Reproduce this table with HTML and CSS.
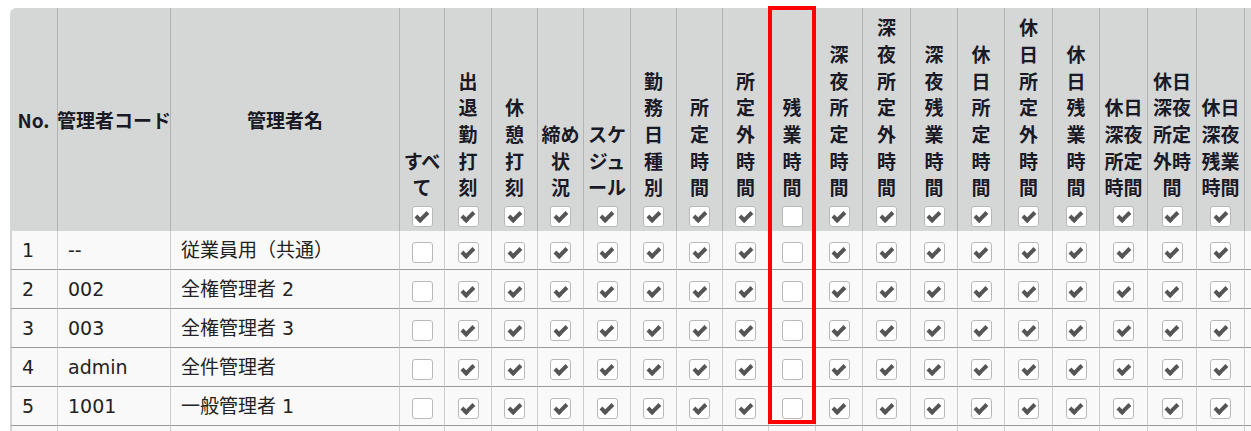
FILE: index.html
```html
<!DOCTYPE html>
<html lang="ja">
<head>
<meta charset="utf-8">
<title>管理者別 表示項目設定</title>
<link rel="stylesheet" href="styles.css">
</head>
<body>
<div class="wrap">
  <div class="grid">
    <div class="h mid first">No.</div>
    <div class="h mid">管理者コード</div>
    <div class="h mid">管理者名</div>
    <div class="h"><div class="lbl">すべ<br>て</div><span class="cb on"></span></div>
    <div class="h"><div class="lbl">出<br>退<br>勤<br>打<br>刻</div><span class="cb on"></span></div>
    <div class="h"><div class="lbl">休<br>憩<br>打<br>刻</div><span class="cb on"></span></div>
    <div class="h"><div class="lbl">締め<br>状<br>況</div><span class="cb on"></span></div>
    <div class="h"><div class="lbl">スケ<br>ジュ<br>ール</div><span class="cb on"></span></div>
    <div class="h"><div class="lbl">勤<br>務<br>日<br>種<br>別</div><span class="cb on"></span></div>
    <div class="h"><div class="lbl">所<br>定<br>時<br>間</div><span class="cb on"></span></div>
    <div class="h"><div class="lbl">所<br>定<br>外<br>時<br>間</div><span class="cb on"></span></div>
    <div class="h"><div class="lbl">残<br>業<br>時<br>間</div><span class="cb"></span></div>
    <div class="h"><div class="lbl">深<br>夜<br>所<br>定<br>時<br>間</div><span class="cb on"></span></div>
    <div class="h"><div class="lbl">深<br>夜<br>所<br>定<br>外<br>時<br>間</div><span class="cb on"></span></div>
    <div class="h"><div class="lbl">深<br>夜<br>残<br>業<br>時<br>間</div><span class="cb on"></span></div>
    <div class="h"><div class="lbl">休<br>日<br>所<br>定<br>時<br>間</div><span class="cb on"></span></div>
    <div class="h"><div class="lbl">休<br>日<br>所<br>定<br>外<br>時<br>間</div><span class="cb on"></span></div>
    <div class="h"><div class="lbl">休<br>日<br>残<br>業<br>時<br>間</div><span class="cb on"></span></div>
    <div class="h"><div class="lbl">休日<br>深夜<br>所定<br>時間</div><span class="cb on"></span></div>
    <div class="h"><div class="lbl">休日<br>深夜<br>所定<br>外時<br>間</div><span class="cb on"></span></div>
    <div class="h"><div class="lbl">休日<br>深夜<br>残業<br>時間</div><span class="cb on"></span></div>
    <div class="h"><span class="cb on"></span></div>

    <div class="c first">1</div><div class="c">--</div><div class="c">従業員用（共通）</div>
    <div class="c k"><span class="cb"></span></div><div class="c k"><span class="cb on"></span></div><div class="c k"><span class="cb on"></span></div><div class="c k"><span class="cb on"></span></div><div class="c k"><span class="cb on"></span></div><div class="c k"><span class="cb on"></span></div><div class="c k"><span class="cb on"></span></div><div class="c k"><span class="cb on"></span></div><div class="c k"><span class="cb"></span></div><div class="c k"><span class="cb on"></span></div><div class="c k"><span class="cb on"></span></div><div class="c k"><span class="cb on"></span></div><div class="c k"><span class="cb on"></span></div><div class="c k"><span class="cb on"></span></div><div class="c k"><span class="cb on"></span></div><div class="c k"><span class="cb on"></span></div><div class="c k"><span class="cb on"></span></div><div class="c k"><span class="cb on"></span></div><div class="c k"><span class="cb on"></span></div>

    <div class="c first">2</div><div class="c">002</div><div class="c">全権管理者 2</div>
    <div class="c k"><span class="cb"></span></div><div class="c k"><span class="cb on"></span></div><div class="c k"><span class="cb on"></span></div><div class="c k"><span class="cb on"></span></div><div class="c k"><span class="cb on"></span></div><div class="c k"><span class="cb on"></span></div><div class="c k"><span class="cb on"></span></div><div class="c k"><span class="cb on"></span></div><div class="c k"><span class="cb"></span></div><div class="c k"><span class="cb on"></span></div><div class="c k"><span class="cb on"></span></div><div class="c k"><span class="cb on"></span></div><div class="c k"><span class="cb on"></span></div><div class="c k"><span class="cb on"></span></div><div class="c k"><span class="cb on"></span></div><div class="c k"><span class="cb on"></span></div><div class="c k"><span class="cb on"></span></div><div class="c k"><span class="cb on"></span></div><div class="c k"><span class="cb on"></span></div>

    <div class="c first">3</div><div class="c">003</div><div class="c">全権管理者 3</div>
    <div class="c k"><span class="cb"></span></div><div class="c k"><span class="cb on"></span></div><div class="c k"><span class="cb on"></span></div><div class="c k"><span class="cb on"></span></div><div class="c k"><span class="cb on"></span></div><div class="c k"><span class="cb on"></span></div><div class="c k"><span class="cb on"></span></div><div class="c k"><span class="cb on"></span></div><div class="c k"><span class="cb"></span></div><div class="c k"><span class="cb on"></span></div><div class="c k"><span class="cb on"></span></div><div class="c k"><span class="cb on"></span></div><div class="c k"><span class="cb on"></span></div><div class="c k"><span class="cb on"></span></div><div class="c k"><span class="cb on"></span></div><div class="c k"><span class="cb on"></span></div><div class="c k"><span class="cb on"></span></div><div class="c k"><span class="cb on"></span></div><div class="c k"><span class="cb on"></span></div>

    <div class="c first">4</div><div class="c">admin</div><div class="c">全件管理者</div>
    <div class="c k"><span class="cb"></span></div><div class="c k"><span class="cb on"></span></div><div class="c k"><span class="cb on"></span></div><div class="c k"><span class="cb on"></span></div><div class="c k"><span class="cb on"></span></div><div class="c k"><span class="cb on"></span></div><div class="c k"><span class="cb on"></span></div><div class="c k"><span class="cb on"></span></div><div class="c k"><span class="cb"></span></div><div class="c k"><span class="cb on"></span></div><div class="c k"><span class="cb on"></span></div><div class="c k"><span class="cb on"></span></div><div class="c k"><span class="cb on"></span></div><div class="c k"><span class="cb on"></span></div><div class="c k"><span class="cb on"></span></div><div class="c k"><span class="cb on"></span></div><div class="c k"><span class="cb on"></span></div><div class="c k"><span class="cb on"></span></div><div class="c k"><span class="cb on"></span></div>

    <div class="c first">5</div><div class="c">1001</div><div class="c">一般管理者 1</div>
    <div class="c k"><span class="cb"></span></div><div class="c k"><span class="cb on"></span></div><div class="c k"><span class="cb on"></span></div><div class="c k"><span class="cb on"></span></div><div class="c k"><span class="cb on"></span></div><div class="c k"><span class="cb on"></span></div><div class="c k"><span class="cb on"></span></div><div class="c k"><span class="cb on"></span></div><div class="c k"><span class="cb"></span></div><div class="c k"><span class="cb on"></span></div><div class="c k"><span class="cb on"></span></div><div class="c k"><span class="cb on"></span></div><div class="c k"><span class="cb on"></span></div><div class="c k"><span class="cb on"></span></div><div class="c k"><span class="cb on"></span></div><div class="c k"><span class="cb on"></span></div><div class="c k"><span class="cb on"></span></div><div class="c k"><span class="cb on"></span></div><div class="c k"><span class="cb on"></span></div>

    <div class="c first"></div><div class="c"></div><div class="c"></div>
    <div class="c k"></div><div class="c k"></div><div class="c k"></div><div class="c k"></div><div class="c k"></div><div class="c k"></div><div class="c k"></div><div class="c k"></div><div class="c k"></div><div class="c k"></div><div class="c k"></div><div class="c k"></div><div class="c k"></div><div class="c k"></div><div class="c k"></div><div class="c k"></div><div class="c k"></div><div class="c k"></div><div class="c k"></div>
  </div>
  <div class="mark"></div>
</div>
</body>
</html>
```

FILE: styles.css
```css
html, body {
  margin: 0;
  padding: 0;
  background: #ffffff;
}

body {
  font-family: "DejaVu Sans", "Noto Sans CJK JP", sans-serif;
  color: #222222;
}

.wrap {
  position: relative;
  padding: 8px 0 0 10px;
  overflow: hidden;
  height: 423px;
}

.grid {
  display: grid;
  width: max-content;
  grid-template-columns: 48px 113px 229px 45px 47px 46px 46px 47px 46px 46px 46px 47px 47px 48px 47px 47px 48px 47px 48px 49px 48px 48px;
  grid-template-rows: 223px repeat(6, 39px);
}

.h {
  box-sizing: border-box;
  background: #d5d7d7;
  border-right: 1px solid #b2b4b4;
  padding: 6px 0 4px;
  display: flex;
  flex-direction: column;
  align-items: center;
  justify-content: flex-end;
  font-family: "Noto Sans CJK JP", sans-serif;
  font-weight: 700;
  font-size: 19px;
  line-height: 26.67px;
  color: #1a1a26;
  text-align: center;
  white-space: nowrap;
}

.h.mid {
  justify-content: center;
}

.h.first {
  border-top-left-radius: 6px;
}

.lbl {
  margin-bottom: 5px;
}

.c {
  box-sizing: border-box;
  background: #f9f9f9;
  border-right: 1px solid #cdcdcd;
  border-bottom: 1px solid #9a9a9a;
  display: flex;
  align-items: center;
  padding: 0 10px;
  font-size: 19px;
  line-height: 27px;
  white-space: nowrap;
}

.c.first {
  border-left: 2px solid #d2d2d2;
}

.c.k {
  justify-content: center;
  padding: 0;
}

.c.k .cb {
  margin-top: 4px;
}

.cb {
  box-sizing: border-box;
  width: 21px;
  height: 21px;
  flex: none;
  border: 1px solid #b9b9b9;
  border-radius: 3px;
  background: #ffffff;
  display: flex;
  align-items: center;
  justify-content: center;
}

.cb.on::after {
  content: "";
  width: 3.5px;
  height: 9px;
  border: solid #555555;
  border-width: 0 4px 4px 0;
  transform: translateY(-1px) rotate(45deg);
}

.mark {
  position: absolute;
  left: 768px;
  top: 6px;
  width: 48px;
  height: 418px;
  box-sizing: border-box;
  border: 4px solid #ff0000;
}
```
